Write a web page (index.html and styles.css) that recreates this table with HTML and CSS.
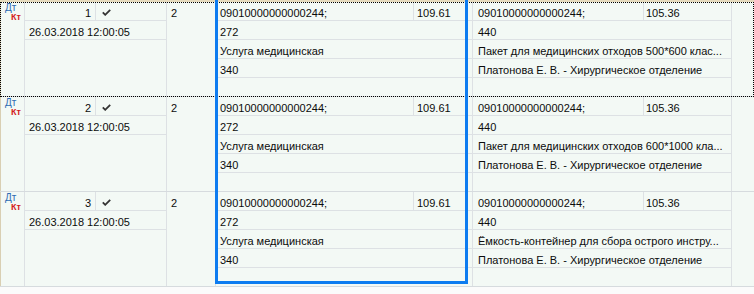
FILE: index.html
```html
<!DOCTYPE html>
<html>
<head>
<meta charset="utf-8">
<link rel="stylesheet" href="styles.css">
</head>
<body>
<div class="grid">
  <div class="topbar"></div>

  <div class="rec focused">
    <div class="c ind"><span class="dt">Дт</span><span class="kt">Кт</span></div>
    <div class="c num">1</div>
    <div class="c chk"><svg width="9" height="7" viewBox="0 0 9 7"><path d="M0.8 3.4 L3.2 5.8 L8.2 0.8" fill="none" stroke="#333" stroke-width="1.8"/></svg></div>
    <div class="c date">26.03.2018 12:00:05</div>
    <div class="c blank"></div>
    <div class="c qty">2</div>
    <div class="c a1">09010000000000244;</div>
    <div class="c a1p">109.61</div>
    <div class="c a2">272</div>
    <div class="c a3">Услуга медицинская</div>
    <div class="c a4">340</div>
    <div class="c a5"></div>
    <div class="c b1">09010000000000244;</div>
    <div class="c b1p">105.36</div>
    <div class="c b2">440</div>
    <div class="c b3">Пакет для медицинских отходов 500*600 клас...</div>
    <div class="c b4">Платонова Е. В. - Хирургическое отделение</div>
    <div class="c b5"></div>
    <div class="c fill"></div>
  </div>

  <div class="rec">
    <div class="c ind"><span class="dt">Дт</span><span class="kt">Кт</span></div>
    <div class="c num">2</div>
    <div class="c chk"><svg width="9" height="7" viewBox="0 0 9 7"><path d="M0.8 3.4 L3.2 5.8 L8.2 0.8" fill="none" stroke="#333" stroke-width="1.8"/></svg></div>
    <div class="c date">26.03.2018 12:00:05</div>
    <div class="c blank"></div>
    <div class="c qty">2</div>
    <div class="c a1">09010000000000244;</div>
    <div class="c a1p">109.61</div>
    <div class="c a2">272</div>
    <div class="c a3">Услуга медицинская</div>
    <div class="c a4">340</div>
    <div class="c a5"></div>
    <div class="c b1">09010000000000244;</div>
    <div class="c b1p">105.36</div>
    <div class="c b2">440</div>
    <div class="c b3">Пакет для медицинских отходов 600*1000 кла...</div>
    <div class="c b4">Платонова Е. В. - Хирургическое отделение</div>
    <div class="c b5"></div>
    <div class="c fill"></div>
  </div>

  <div class="rec">
    <div class="c ind"><span class="dt">Дт</span><span class="kt">Кт</span></div>
    <div class="c num">3</div>
    <div class="c chk"><svg width="9" height="7" viewBox="0 0 9 7"><path d="M0.8 3.4 L3.2 5.8 L8.2 0.8" fill="none" stroke="#333" stroke-width="1.8"/></svg></div>
    <div class="c date">26.03.2018 12:00:05</div>
    <div class="c blank"></div>
    <div class="c qty">2</div>
    <div class="c a1">09010000000000244;</div>
    <div class="c a1p">109.61</div>
    <div class="c a2">272</div>
    <div class="c a3">Услуга медицинская</div>
    <div class="c a4">340</div>
    <div class="c a5"></div>
    <div class="c b1">09010000000000244;</div>
    <div class="c b1p">105.36</div>
    <div class="c b2">440</div>
    <div class="c b3">Ёмкость-контейнер для сбора острого инстру...</div>
    <div class="c b4">Платонова Е. В. - Хирургическое отделение</div>
    <div class="c b5"></div>
    <div class="c fill"></div>
  </div>

  <div class="selection"></div>
</div>
</body>
</html>
```

FILE: styles.css
```css
* { box-sizing: border-box; }
html, body { margin: 0; padding: 0; }
body {
  background: #fbfbfb;
  font-family: "Liberation Sans", Arial, sans-serif;
  font-size: 11px;
  color: #0c0c0c;
  width: 754px;
  height: 294px;
  overflow: hidden;
}
.grid { position: relative; width: 754px; }
.topbar { height: 2px; background: #e6dbbd; }

.rec {
  display: grid;
  grid-template-columns: 25px 71px 71px 49px 198px 59px 171px 88px 22px;
  grid-template-rows: 19px 19px 19px 19px 18px;
  background: #f3f9f5;
  border-bottom: 1px solid #d6dbde;
}
.rec.focused { outline: 1px dotted #000; outline-offset: -1px; }

.c {
  padding: 3px 4px 0;
  line-height: 16px;
  white-space: nowrap;
  overflow: hidden;
  border-color: #dde1e4;
  border-style: solid;
  border-width: 0;
}
.ind { grid-column: 1; grid-row: 1 / 6; border-right-width: 1px; box-shadow: inset 1px 0 #d9cfb3; padding: 1px 0 0; line-height: 1; }
.dt { display: block; color: #2f6cb3; font-size: 10px; line-height: 10px; margin-left: 5px; }
.kt { display: block; color: #d31c1c; font-size: 9px; font-weight: bold; line-height: 9px; margin-left: 11px; }
.num { grid-column: 2; grid-row: 1; text-align: right; border-right-width: 1px; border-bottom-width: 1px; }
.chk { grid-column: 3; grid-row: 1; border-right-width: 1px; border-bottom-width: 1px; padding: 7px 0 0 6px; }
.chk svg { display: block; }
.date { grid-column: 2 / 4; grid-row: 2; border-right-width: 1px; border-bottom-width: 1px; }
.blank { grid-column: 2 / 4; grid-row: 3 / 6; border-right-width: 1px; }
.qty { grid-column: 4; grid-row: 1 / 6; border-right-width: 1px; }
.a1 { grid-column: 5; grid-row: 1; border-right-width: 1px; border-bottom-width: 1px; }
.a1p { grid-column: 6; grid-row: 1; border-right-width: 1px; border-bottom-width: 1px; padding-left: 3px; }
.a2 { grid-column: 5 / 7; grid-row: 2; border-right-width: 1px; border-bottom-width: 1px; }
.a3 { grid-column: 5 / 7; grid-row: 3; border-right-width: 1px; border-bottom-width: 1px; }
.a4 { grid-column: 5 / 7; grid-row: 4; border-right-width: 1px; border-bottom-width: 1px; }
.a5 { grid-column: 5 / 7; grid-row: 5; border-right-width: 1px; }
.b1 { grid-column: 7; grid-row: 1; border-right-width: 1px; border-bottom-width: 1px; padding-left: 5px; }
.b1p { grid-column: 8; grid-row: 1; border-right-width: 1px; border-bottom-width: 1px; padding-left: 2px; }
.b2 { grid-column: 7 / 9; grid-row: 2; border-right-width: 1px; border-bottom-width: 1px; padding-left: 5px; }
.b3 { grid-column: 7 / 9; grid-row: 3; border-right-width: 1px; border-bottom-width: 1px; padding-left: 5px; }
.b4 { grid-column: 7 / 9; grid-row: 4; border-right-width: 1px; border-bottom-width: 1px; padding-left: 5px; }
.b5 { grid-column: 7 / 9; grid-row: 5; border-right-width: 1px; }
.fill { grid-column: 9; grid-row: 1 / 6; }

.selection {
  position: absolute;
  left: 215px;
  top: -3px;
  width: 253px;
  height: 287px;
  border: 3px solid #0d7cf0;
  pointer-events: none;
}
```
